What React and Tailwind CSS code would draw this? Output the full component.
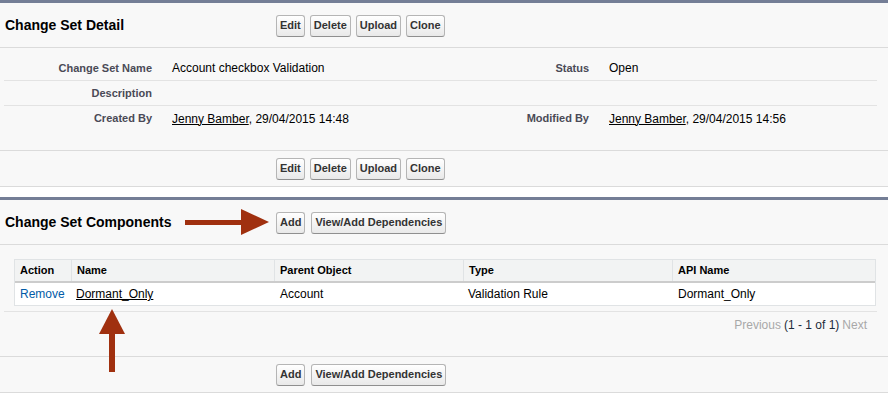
import React from 'react';

const FONT = { fontFamily: '"Liberation Sans", Arial, Helvetica, sans-serif' };

function Btn({ children }) {
  return (
    <button
      type="button"
      className="h-[22px] px-[3px] border border-[#b5b5b5] border-b-[#8f8f8f] rounded-[3px] bg-gradient-to-b from-white to-[#e9e9e9] text-[11px] font-bold text-[#333] leading-none"
    >
      {children}
    </button>
  );
}

function DetailRow({ l1, v1, l2, v2, last }) {
  return (
    <div className={`grid grid-cols-[156px_277px_160px_1fr] h-[25px] items-center ${last ? '' : 'border-b border-[#e3e3e3]'}`}>
      <div className="text-right pr-[8px] text-[11px] font-bold text-[#4a4a56]">{l1}</div>
      <div className="pl-[12px] text-[12px] text-black">{v1}</div>
      <div className="text-right pr-[8px] text-[11px] font-bold text-[#4a4a56]">{l2}</div>
      <div className="pl-[12px] text-[12px] text-black">{v2}</div>
    </div>
  );
}

function RightArrow() {
  return (
    <svg width="84" height="26" viewBox="0 0 84 26" className="block">
      <rect x="0" y="11" width="58" height="5" fill="#a0300f" />
      <polygon points="56,0 84,13 56,26" fill="#a0300f" />
    </svg>
  );
}

function UpArrow() {
  return (
    <svg width="26" height="64" viewBox="0 0 26 64" className="block">
      <polygon points="13,0 26,25 0,25" fill="#a0300f" />
      <rect x="10" y="23" width="6" height="40" fill="#a0300f" />
    </svg>
  );
}

const cols = [
  { key: 'action', label: 'Action', w: 'w-[56px]' },
  { key: 'name', label: 'Name', w: 'w-[203px]' },
  { key: 'parent', label: 'Parent Object', w: 'w-[189px]' },
  { key: 'type', label: 'Type', w: 'w-[209px]' },
  { key: 'api', label: 'API Name', w: 'flex-1' },
];

export default function App() {
  return (
    <div className="w-[888px] h-[398px] bg-white overflow-hidden" style={FONT}>
      {/* Change Set Detail */}
      <div className="bg-[#f8f8f8] border-t-[3px] border-[#747e96] border-b border-b-[#dbdbdb]">
        <div className="flex items-center h-[45px] border-b border-[#dbdbdb]">
          <div className="w-[276px] pl-[5px] text-[14px] font-bold text-black">Change Set Detail</div>
          <div className="flex gap-[5px] pt-[1px]">
            <Btn>Edit</Btn>
            <Btn>Delete</Btn>
            <Btn>Upload</Btn>
            <Btn>Clone</Btn>
          </div>
        </div>
        <div className="ml-[4px] mr-[11px] pt-[8px] pb-[19px]">
          <DetailRow l1="Change Set Name" v1="Account checkbox Validation" l2="Status" v2="Open" />
          <DetailRow l1="Description" v1="" l2="" v2="" />
          <DetailRow
            l1="Created By"
            v1={<span><span className="underline">Jenny Bamber</span>, 29/04/2015 14:48</span>}
            l2="Modified By"
            v2={<span><span className="underline">Jenny Bamber</span>, 29/04/2015 14:56</span>}
            last
          />
        </div>
        <div className="flex gap-[5px] items-center h-[36px] pl-[276px] border-t border-[#dbdbdb]">
          <Btn>Edit</Btn>
          <Btn>Delete</Btn>
          <Btn>Upload</Btn>
          <Btn>Clone</Btn>
        </div>
      </div>

      {/* Change Set Components */}
      <div className="relative mt-[10px] bg-[#f8f8f8] border-t-[3px] border-[#747e96] border-b border-b-[#dbdbdb]">
        <div className="flex items-center h-[45px] border-b border-[#dbdbdb]">
          <div className="w-[276px] pl-[5px] flex items-center">
            <span className="text-[14px] font-bold text-black">Change Set Components</span>
            <span className="ml-[14px]"><RightArrow /></span>
          </div>
          <div className="flex gap-[6px] pt-[1px]">
            <Btn>Add</Btn>
            <Btn>View/Add Dependencies</Btn>
          </div>
        </div>
        <div className="pt-[14px] pl-[14px] pr-[12px]">
          <div className="border border-[#e0e3e5] bg-white">
            <div className="flex h-[23px] items-center bg-[#f2f3f3] border-b-2 border-[#cccccc] text-[11px] font-bold text-black">
              {cols.map((c, i) => (
                <div key={c.key} className={`${c.w} h-full flex items-center px-[5px] ${i > 0 ? 'border-l border-[#e0e3e5]' : ''}`}>
                  {c.label}
                </div>
              ))}
            </div>
            <div className="flex h-[22px] items-center text-[12px] text-black">
              <div className="w-[56px] px-[5px] text-[#015ba7]">Remove</div>
              <div className="w-[203px] px-[5px]"><span className="underline">Dormant_Only</span></div>
              <div className="w-[189px] px-[6px]">Account</div>
              <div className="w-[209px] px-[5px]">Validation Rule</div>
              <div className="flex-1 px-[6px]">Dormant_Only</div>
            </div>
          </div>
        </div>
        <div className="ml-[4px] mr-[11px] mt-[5px] border-t border-[#e3e3e3] h-[45px] flex justify-end pt-[4px] pr-[10px] text-[12px]">
          <span className="text-[#a8a8a8]">Previous</span>
          <span className="text-[#1c2a3a] ml-[3px]">(1 - 1 of 1)</span>
          <span className="text-[#a8a8a8] ml-[3px]">Next</span>
        </div>
        <div className="flex gap-[6px] items-center h-[36px] pl-[276px] border-t border-[#dbdbdb]">
          <Btn>Add</Btn>
          <Btn>View/Add Dependencies</Btn>
        </div>
        <div className="absolute left-[99px] top-[109px]">
          <UpArrow />
        </div>
      </div>
    </div>
  );
}
